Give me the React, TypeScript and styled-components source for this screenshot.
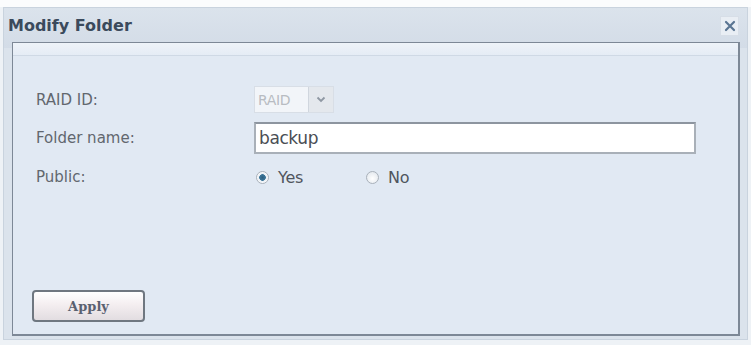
import React from "react";
import styled, { createGlobalStyle } from "styled-components";

const Global = createGlobalStyle`
  html, body { margin: 0; padding: 0; background: #f4f6f9; }
  body { width: 751px; height: 345px; overflow: hidden; font-family: "DejaVu Sans", Verdana, sans-serif; }
`;

const Page = styled.div`
  width: 751px;
  height: 345px;
  box-sizing: border-box;
  padding: 7px 3px 5px 3px;
  background: linear-gradient(#fbfcfd 0, #fbfcfd 7px, #eef2f6 7px);
`;

const Window = styled.div`
  height: 100%;
  box-sizing: border-box;
  border: 1px solid #c9d3de;
  background: linear-gradient(#dbe3ec, #d3dce7 40px, #dbe3ec 40px);
  display: flex;
  flex-direction: column;
  padding: 0 7px 3px 8px;
`;

const TitleBar = styled.div`
  height: 34px;
  display: flex;
  align-items: center;
  justify-content: space-between;
`;

const Title = styled.div`
  font-family: "DejaVu Sans", Verdana, sans-serif;
  font-weight: bold;
  font-size: 16px;
  color: #3b4a5c;
  letter-spacing: 0;
  margin-left: -4px;
`;

const Close = styled.div`
  width: 17px;
  height: 18px;
  background: #e9eef4;
  border: 1px solid #d7dee7;
  display: flex;
  align-items: center;
  justify-content: center;
  margin-right: 1px;
  margin-top: 2px;
`;

const Panel = styled.div`
  flex: 1;
  border: 1px solid #7d8896;
  border-right-width: 2px;
  border-bottom-width: 2px;
  background: #e1e9f3;
  display: flex;
  flex-direction: column;
`;

const Band = styled.div`
  height: 12px;
  background: linear-gradient(#eef3f9, #e5ecf5);
  border-bottom: 1px solid #cfd9e5;
`;

const Form = styled.div`
  display: grid;
  grid-template-columns: 218px 1fr;
  row-gap: 9px;
  padding: 30px 42px 0 23px;
  align-items: center;
  flex: 1;
  align-content: start;
`;

const Label = styled.div`
  font-family: "DejaVu Sans", Verdana, sans-serif;
  font-size: 15px;
  color: #62676e;
  letter-spacing: 0;
`;

const Select = styled.div`
  width: 80px;
  height: 27px;
  display: flex;
  border: 1px solid #d8dee6;
  background: #f2f5f9;
  box-sizing: border-box;
`;

const SelectText = styled.div`
  flex: 1;
  font-family: "DejaVu Sans", Verdana, sans-serif;
  font-size: 14px;
  color: #b8bcc2;
  display: flex;
  align-items: center;
  padding-left: 3px;
  border-right: 1px solid #d0d6de;
  letter-spacing: -0.4px;
`;

const SelectBtn = styled.div`
  width: 24px;
  background: #e4e8ed;
  display: flex;
  align-items: center;
  justify-content: center;
`;

const TextInput = styled.div`
  height: 32px;
  box-sizing: border-box;
  border: 2px solid #a9b0b8;
  border-top-color: #8d959f;
  background: #ffffff;
  font-family: "DejaVu Sans", Verdana, sans-serif;
  font-size: 17px;
  color: #4a4e54;
  display: flex;
  align-items: center;
  padding-left: 3px;
  letter-spacing: -0.4px;
`;

const RadioGroup = styled.div`
  display: flex;
  align-items: center;
  height: 28px;
`;

const RadioItem = styled.div<{ $w: number }>`
  width: ${(p) => p.$w}px;
  display: flex;
  align-items: center;
  gap: 9px;
  font-family: "DejaVu Sans", Verdana, sans-serif;
  font-size: 16px;
  color: #50555d;
  letter-spacing: -0.2px;
`;

const Radio = styled.div<{ $on?: boolean }>`
  width: 11px;
  height: 11px;
  border-radius: 50%;
  border: 1px solid #a9b1ba;
  background: ${(p) =>
    p.$on
      ? "radial-gradient(circle, #2c5f80 0, #3d7699 3px, #e8eef4 3.6px, #ffffff 6px)"
      : "radial-gradient(circle at 50% 60%, #ffffff, #dde3ea)"};
  margin-left: 2px;
`;

const Footer = styled.div`
  padding: 0 0 12px 19px;
`;

const Button = styled.div`
  width: 113px;
  height: 32px;
  box-sizing: border-box;
  border: 2px solid #6f7780;
  border-radius: 4px;
  background: linear-gradient(#ffffff, #f4eef0 45%, #e2dde1);
  display: flex;
  align-items: center;
  justify-content: center;
  font-family: "DejaVu Serif", "Liberation Serif", serif;
  font-weight: bold;
  font-size: 13px;
  color: #5a6170;
`;

export default function App() {
  return (
    <>
      <Global />
      <Page>
        <Window>
          <TitleBar>
            <Title>Modify Folder</Title>
            <Close>
              <svg width="12" height="12" viewBox="0 0 12 12">
                <path d="M2 2 L10 10 M10 2 L2 10" stroke="#5a7592" strokeWidth="2.2" strokeLinecap="round" />
              </svg>
            </Close>
          </TitleBar>
          <Panel>
            <Band />
            <Form>
              <Label>RAID ID:</Label>
              <Select>
                <SelectText>RAID</SelectText>
                <SelectBtn>
                  <svg width="10" height="7" viewBox="0 0 10 7">
                    <path d="M1.5 1.5 L5 5 L8.5 1.5" stroke="#8f98a3" strokeWidth="1.8" fill="none" />
                  </svg>
                </SelectBtn>
              </Select>
              <Label>Folder name:</Label>
              <TextInput>backup</TextInput>
              <Label>Public:</Label>
              <RadioGroup>
                <RadioItem $w={110}>
                  <Radio $on />
                  Yes
                </RadioItem>
                <RadioItem $w={60}>
                  <Radio />
                  No
                </RadioItem>
              </RadioGroup>
            </Form>
            <Footer>
              <Button>Apply</Button>
            </Footer>
          </Panel>
        </Window>
      </Page>
    </>
  );
}
